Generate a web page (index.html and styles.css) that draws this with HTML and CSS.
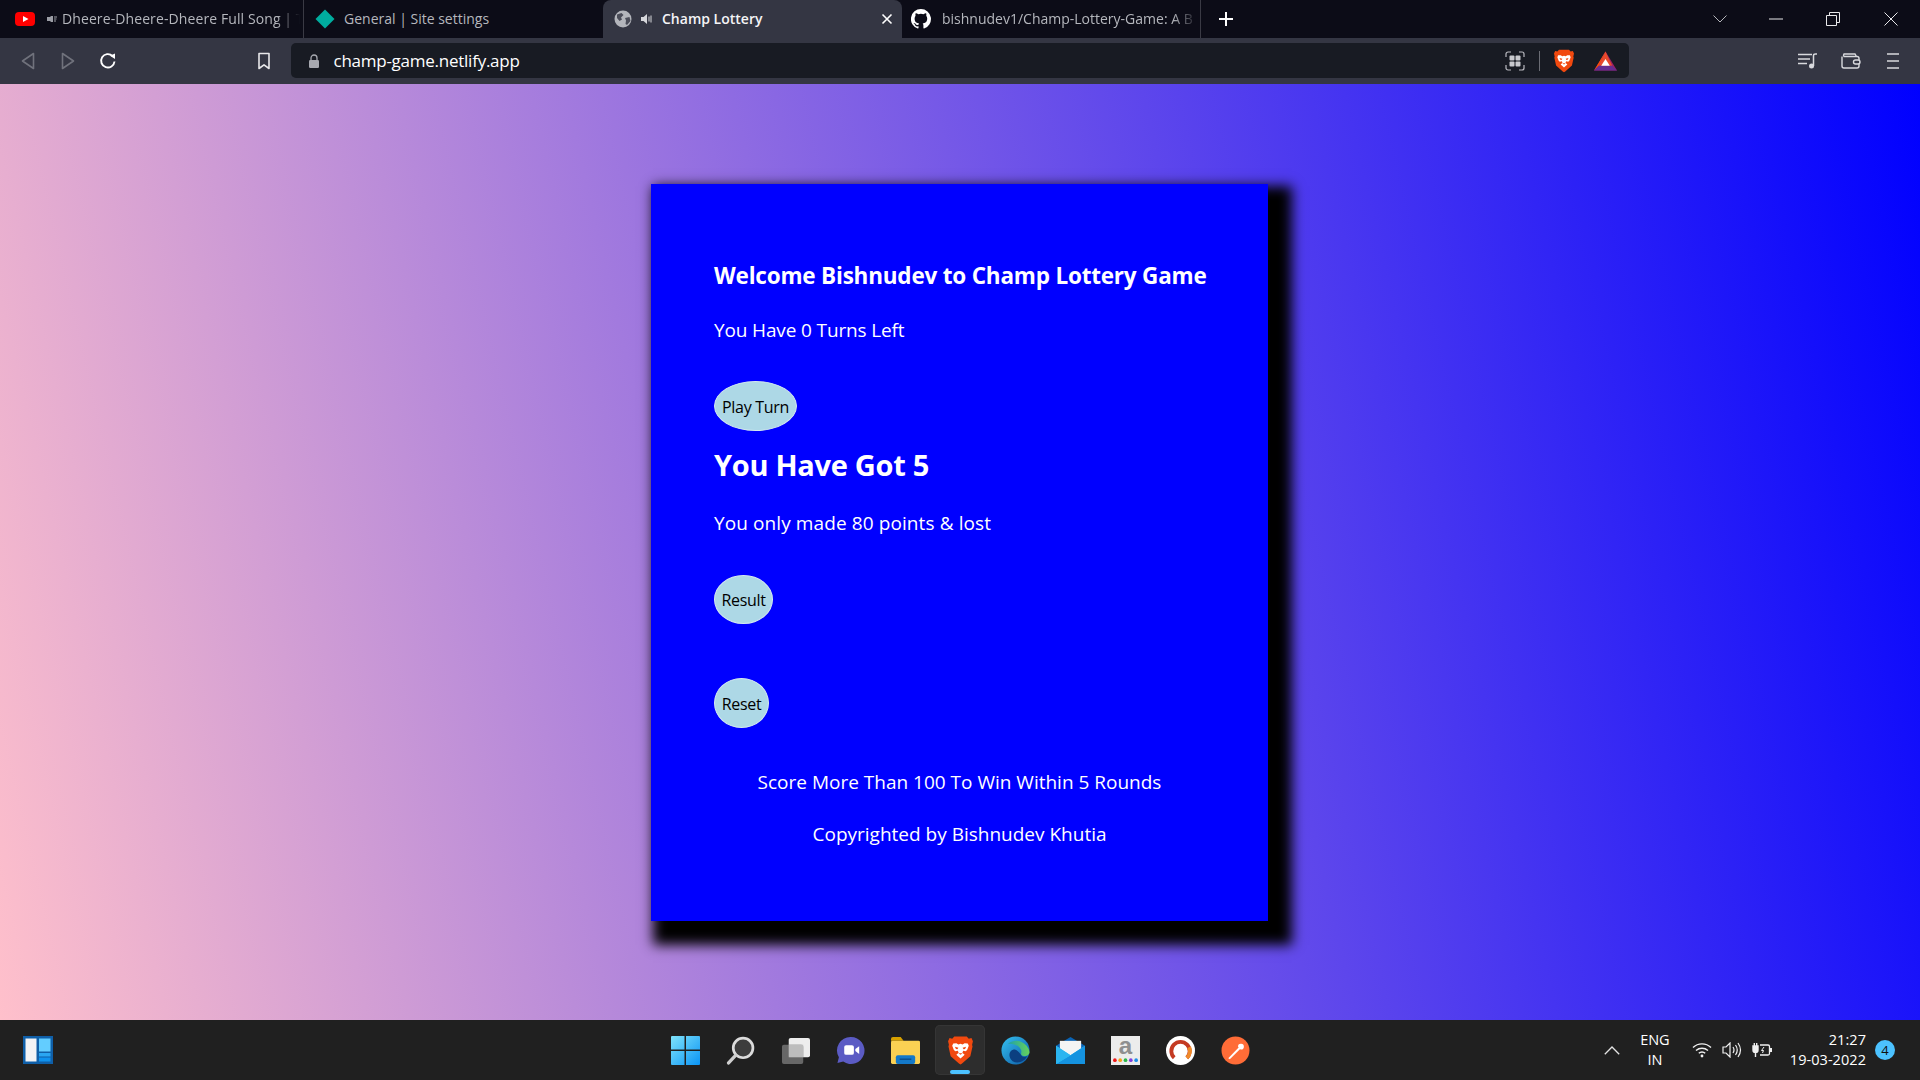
FILE: index.html
```html
<!DOCTYPE html>
<html lang="en">
<head>
<meta charset="utf-8">
<title>Champ Lottery</title>
<link rel="stylesheet" href="styles.css">
</head>
<body>
<svg class="defs" width="0" height="0">
  <defs>
    <symbol id="brave" viewBox="0 0 24 28">
      <path fill="#f1490f" d="M12 0.5 18 0.5 20 2.6 22.6 2 24 5 23.2 8.5 23.6 10.2 21.5 19.5 13.5 26.6 12 27.5 10.5 26.6 2.5 19.5 0.4 10.2 0.8 8.5 0 5 1.4 2 4 2.6 6 0.5Z"/>
      <path fill="#fff" d="M5 7.2 8 7 10 8.2 12 7.6 14 8.2 16 7 19 7.2 20 9.5 18.4 13.6 17 14.8 14.6 14.2 13.8 16.2 16 18.2 12 21.8 8 18.2 10.2 16.2 9.4 14.2 7 14.8 5.6 13.6 4 9.5Z"/>
      <path fill="#f1490f" d="M6.6 10.4 10 11.4 9 12.8 7.6 12.6ZM17.4 10.4 14 11.4 15 12.8 16.4 12.6Z"/>
      <path fill="#f1490f" d="M10 16.6 14 16.6 12 18.2Z"/>
    </symbol>
  </defs>
</svg>

<header class="tabstrip">
  <div class="tab tab-first">
    <svg class="fav" viewBox="0 0 20 20"><rect x="0" y="3" width="20" height="14" rx="4" fill="#f00"/><path d="M8 7l5.500 3L8 13z" fill="#fff"/></svg>
    <svg class="speaker" viewBox="0 0 12 12"><path d="M1 4h3l1 -1h2v6H5L4 8H1z" fill="#9c9ea6"/><path d="M8 4h3M8 6h2.500M8 8h2" stroke="#9c9ea6" fill="none"/></svg>
    <span class="tab-title fade">Dheere-Dheere-Dheere Full Song | T</span>
  </div>
  <div class="tab">
    <svg class="fav" viewBox="0 0 20 20"><path d="M10 0.500 19.500 10 10 19.500 0.500 10Z" fill="#00ad9f"/></svg>
    <span class="tab-title">General | Site settings</span>
  </div>
  <div class="tab tab-active">
    <svg class="fav fav-globe" viewBox="0 0 18 18"><circle cx="9" cy="9" r="8.500" fill="#b3b5bb"/><path d="M3 4.500 7.500 3 9.500 5 7 7.500 8 9.500 5.500 11 3 8ZM11 8l4.500 -1 1 4-3.500 4-1.500 -1 .5-3.500Z" fill="#4a4c58"/></svg>
    <svg class="speaker-on" viewBox="0 0 14 14"><path d="M1 5h2.500L7 2v10L3.500 9H1z" fill="#d6d7db"/><path d="M9 4.500v5M11 3.500v7" stroke="#d6d7db" fill="none"/></svg>
    <span class="tab-title title-active">Champ Lottery</span>
    <svg class="tab-close" viewBox="0 0 12 12"><path d="M1.500 1.500l9 9M10.500 1.500l-9 9" stroke="#fff" stroke-width="1.600"/></svg>
  </div>
  <div class="tab tab-last">
    <svg class="fav" viewBox="0 0 20 20"><path fill="#fff" fill-rule="evenodd" d="M10 0a10 10 0 0 0-3.200 19.500c.5.100.7-.2.7-.5v-1.700c-2.800.6-3.400-1.300-3.400-1.300-.5-1.200-1.100-1.500-1.100-1.500-.9-.6.100-.6.100-.6 1 .1 1.500 1 1.500 1 .9 1.500 2.300 1.100 2.900.8.100-.6.300-1.100.6-1.300-2.200-.3-4.500-1.100-4.500-4.900 0-1.100.4-2 1-2.700-.1-.3-.4-1.300.1-2.600 0 0 .8-.3 2.700 1a9.500 9.500 0 0 1 5 0c1.900-1.300 2.700-1 2.700-1 .5 1.300.2 2.300.1 2.600.6.700 1 1.600 1 2.700 0 3.800-2.300 4.600-4.500 4.900.4.300.7.900.7 1.900V19c0 .3.200.6.700.5A10 10 0 0 0 10 0z"/></svg>
    <span class="tab-title fade">bishnudev1/Champ-Lottery-Game: A B</span>
  </div>
  <svg class="plus" viewBox="0 0 16 16"><path d="M8 1v14M1 8h14" stroke="#fff" stroke-width="2"/></svg>
  <div class="win-controls">
    <svg class="win-chevron" viewBox="0 0 14 8"><path d="M.5.500 7 7 13.500.500" stroke="#b5b6bb" fill="none"/></svg>
    <svg class="win-min" viewBox="0 0 14 2"><path d="M0 1h14" stroke="#e8e8ea"/></svg>
    <svg class="win-max" viewBox="0 0 14 14"><path d="M.5 3.500h10v10H.5zM3.500 3.500V.5h10v10h-3" stroke="#e8e8ea" fill="none"/></svg>
    <svg class="win-close" viewBox="0 0 14 14"><path d="M.5.500l13 13M13.500.500l-13 13" stroke="#e8e8ea" fill="none"/></svg>
  </div>
</header>

<nav class="toolbar">
  <svg class="nav-icon back" viewBox="0 0 14 18"><path d="M12.500 1.500 1.500 9l11 7.500z" stroke="#70727c" stroke-width="1.600" fill="none" stroke-linejoin="round"/></svg>
  <svg class="nav-icon forward" viewBox="0 0 14 18"><path d="M1.500 1.500 12.500 9l-11 7.500z" stroke="#70727c" stroke-width="1.600" fill="none" stroke-linejoin="round"/></svg>
  <svg class="nav-icon reload" viewBox="0 0 18 18"><path d="M15.500 9.500A6.700 6.700 0 1 1 13.500 4" stroke="#fff" stroke-width="1.900" fill="none"/><path d="M11 3.700 16 1.500 16 7Z" fill="#fff"/></svg>
  <svg class="nav-icon bookmark" viewBox="0 0 14 18"><path d="M2 1.500h10v15L7 12.800 2 16.500z" stroke="#e8e8ea" stroke-width="1.600" fill="none" stroke-linejoin="round"/></svg>
  <div class="urlbar">
    <svg class="lock" viewBox="0 0 12 14"><path d="M3 6V4a3 3 0 0 1 6 0v2" stroke="#a7a9b0" stroke-width="1.300" fill="none"/><rect x="1" y="6" width="10" height="8" rx="1.200" fill="#a7a9b0"/></svg>
    <span class="url">champ-game.netlify.app</span>
    <svg class="url-apps" viewBox="0 0 20 20"><path d="M1 6V3a2 2 0 0 1 2-2h3M14 1h3a2 2 0 0 1 2 2v3M19 14v3a2 2 0 0 1-2 2h-3M6 19H3a2 2 0 0 1-2-2v-3" stroke="#b9bac0" stroke-width="1.200" fill="none"/><rect x="4.500" y="4.500" width="5" height="5" rx="1" fill="#c8c9ce"/><rect x="10.500" y="4.500" width="5" height="5" rx="1" fill="#c8c9ce"/><rect x="4.500" y="10.500" width="5" height="5" rx="1" fill="#c8c9ce"/><rect x="10.500" y="10.500" width="5" height="5" rx="1" fill="#c8c9ce"/></svg>
    <span class="url-sep"></span>
    <svg class="url-brave"><use href="#brave"/></svg>
    <svg class="url-bat" viewBox="0 0 24 20"><path d="M12 0 24 20H0Z" fill="#9e1f63"/><path d="M12 0 0 20 5 15Z" fill="#ff5000"/><path d="M12 0 5 15h14Z" fill="#e84a2c"/><path d="M0 20h24l-5-5H5Z" fill="#662d91"/><path d="M12 8 16.500 15h-9Z" fill="#fff"/></svg>
  </div>
  <svg class="tool-icon playlist" viewBox="0 0 20 16"><path d="M0 1.500h14M0 6h12M0 10.500h9" stroke="#d8d9dd" stroke-width="1.500"/><circle cx="13.500" cy="13" r="2.500" fill="#d8d9dd"/><path d="M15.500 13V2.500q0-1.500 2-1.500h1.500" stroke="#d8d9dd" stroke-width="1.500" fill="none"/></svg>
  <svg class="tool-icon wallet" viewBox="0 0 20 16"><path d="M1 3.500V13a2 2 0 0 0 2 2h13a2 2 0 0 0 2-2V5.500a2 2 0 0 0-2-2H3a2 2 0 0 1 0-2.500h11l1.500 2.500" stroke="#d8d9dd" stroke-width="1.400" fill="none"/><rect x="12.500" y="7" width="6.500" height="4" rx="2" stroke="#d8d9dd" stroke-width="1.400" fill="#343643"/></svg>
  <svg class="tool-icon menu" viewBox="0 0 12 16"><path d="M0 1h12M0 8h12M0 15h12" stroke="#d8d9dd" stroke-width="1.500"/></svg>
</nav>

<main class="page">
  <section class="card">
    <h3 class="card-title">Welcome Bishnudev to Champ Lottery Game</h3>
    <p class="line turns">You Have 0 Turns Left</p>
    <button class="pill play">Play Turn</button>
    <h2 class="got">You Have Got 5</h2>
    <p class="line made">You only made 80 points &amp; lost</p>
    <button class="pill result">Result</button>
    <button class="pill reset">Reset</button>
    <p class="line center score">Score More Than 100 To Win Within 5 Rounds</p>
    <p class="line center copy">Copyrighted by Bishnudev Khutia</p>
  </section>
</main>

<footer class="taskbar">
  <svg class="widgets" viewBox="0 0 30 28"><rect width="30" height="28" fill="#0f5fa8"/><rect x="2.500" y="2.500" width="11" height="23" fill="#f2f3f5"/><rect x="16" y="2.500" width="11.500" height="13" fill="#63cdff"/><rect x="16" y="17" width="11.500" height="3.500" fill="#2aa6f2"/><rect x="16" y="21.500" width="11.500" height="4" fill="#0f92ee"/></svg>
  <div class="task-center">
    <div class="task-item"><svg class="ti" viewBox="0 0 29 29"><defs><linearGradient id="winG" x1="0" y1="0" x2="1" y2="1"><stop offset="0" stop-color="#7fe3fb"/><stop offset="1" stop-color="#0a94f5"/></linearGradient></defs><path d="M0 1a1 1 0 0 1 1-1h12.500v13.500H0zM15 0h13a1 1 0 0 1 1 1v12.500H15zM0 15h13.500v14H1a1 1 0 0 1-1-1zM15 15h14v13a1 1 0 0 1-1 1H15z" fill="url(#winG)"/></svg></div>
    <div class="task-item"><svg class="ti" viewBox="0 0 28 28"><circle cx="16.500" cy="11.500" r="9.500" fill="#3d3d3d" stroke="#dcdcdc" stroke-width="2.600"/><path d="M9.500 18.500 2.500 26" stroke="#cfcfcf" stroke-width="3.200" stroke-linecap="round"/></svg></div>
    <div class="task-item"><svg class="ti" viewBox="0 0 30 28"><rect x="8" y="1" width="22" height="20" rx="2" fill="#ededed"/><rect x="1" y="8" width="22" height="20" rx="2" fill="#6e6e6e" fill-opacity=".92"/><rect x="8" y="8" width="15" height="13" fill="#bdbdbd"/></svg></div>
    <div class="task-item"><svg class="ti" viewBox="0 0 30 30"><path d="M15.500 1a14 14 0 1 1-8 25.500L1.500 28l1.500-6A14 14 0 0 1 15.500 1z" fill="#5b5bc4"/><rect x="8.500" y="9.500" width="10" height="10" rx="2" fill="#fff"/><path d="M20 13.500 24 10.500V18.500L20 15.500Z" fill="#fff"/></svg></div>
    <div class="task-item"><svg class="ti" viewBox="0 0 30 28"><path d="M0 2a2 2 0 0 1 2-2h8l3 4h-13z" fill="#d8a100"/><rect y="4" width="30" height="24" rx="1.500" fill="#fbd153"/><rect x="5" y="19" width="20" height="9" rx="2" fill="#1479c9"/><path d="M9 23h12" stroke="#0a4f8c" stroke-width="1.500"/></svg></div>
    <div class="task-item task-active"><svg class="ti"><use href="#brave"/></svg><span class="task-pip"></span></div>
    <div class="task-item"><svg class="ti" viewBox="0 0 30 30"><defs><linearGradient id="edgeA" x1="0" y1="0" x2="1" y2="1"><stop offset="0" stop-color="#35c1f1"/><stop offset="1" stop-color="#0c59a4"/></linearGradient><linearGradient id="edgeB" x1="0" y1="0" x2="1" y2="0"><stop offset="0" stop-color="#1fa0a8"/><stop offset="1" stop-color="#66d35a"/></linearGradient></defs><circle cx="15" cy="15" r="14.500" fill="url(#edgeA)"/><path d="M7 8a14 14 0 0 1 22.500 8.500c0 3-3.500 5-7 4-3-1-1-3-1.500-5.500C20 11 15 7.500 7 8z" fill="url(#edgeB)"/><path d="M12 26c-5-4-4-11 1-12 4 0 6 3 8 6 1 2 4 2 6 1-3 6-10 8-15 5z" fill="#0b3f80"/></svg></div>
    <div class="task-item"><svg class="ti" viewBox="0 0 30 28"><path d="M15 0 30 9V28H0V9Z" fill="#0a63b4"/><path d="M4 4h22v16H4z" fill="#f4f4f4"/><path d="M0 9 15 19 30 9V28H0Z" fill="#2cc4f6"/><path d="M30 28H0L15 19 30 9Z" fill="#1593e0"/><path d="M0 28V9L15 19Z" fill="#2bb5f0"/></svg></div>
    <div class="task-item"><svg class="ti" viewBox="0 0 30 30"><rect width="30" height="30" fill="#ececec"/><text class="amazon-a" x="15" y="19" text-anchor="middle">a</text><circle cx="4" cy="25" r="1.900" fill="#f01818"/><circle cx="9.500" cy="25" r="1.900" fill="#f7a21b"/><circle cx="15" cy="25" r="1.900" fill="#2bb84a"/><circle cx="20.500" cy="25" r="1.900" fill="#7d3ee0"/><circle cx="26" cy="25" r="1.900" fill="#1d8fe8"/></svg></div>
    <div class="task-item"><svg class="ti" viewBox="0 0 30 30"><circle cx="15" cy="15" r="15" fill="#fff"/><path d="M8.500 22.500a9.500 9.500 0 1 1 13 0" stroke="#c43a22" stroke-width="4" fill="none"/><path d="M21.500 22.500a9.500 9.500 0 0 0 2.500-11" stroke="#ef8a2a" stroke-width="4" fill="none"/></svg></div>
    <div class="task-item"><svg class="ti" viewBox="0 0 28 28"><circle cx="14" cy="14" r="13.500" fill="#ff6c37"/><path d="M7 21.500 17 11l1.500 1.500L8.500 22.500ZM16.500 10.500a2.800 2.800 0 1 1 2.500 2.500Z" fill="#fff"/></svg></div>
  </div>
  <div class="tray">
    <svg class="tray-chev" viewBox="0 0 16 9"><path d="M.8 8.200 8 1l7.200 7.200" stroke="#e4e4e4" stroke-width="1.300" fill="none"/></svg>
    <div class="lang"><span>ENG</span><span>IN</span></div>
    <svg class="tray-ico wifi" viewBox="0 0 20 15"><path d="M1 5a13 13 0 0 1 18 0M4 8a9 9 0 0 1 12 0M6.800 10.800a4.500 4.500 0 0 1 6.400 0" stroke="#f0f0f0" stroke-width="1.400" fill="none"/><circle cx="10" cy="13.500" r="1.400" fill="#f0f0f0"/></svg>
    <svg class="tray-ico vol" viewBox="0 0 20 16"><path d="M1 5h3l4-4v14l-4-4H1z" stroke="#f0f0f0" stroke-width="1.200" fill="none"/><path d="M11 5q2 3 0 6M13.500 3q3.500 5 0 10M16 1q5 7 0 14" stroke="#f0f0f0" stroke-width="1.200" fill="none"/></svg>
    <svg class="tray-ico batt" viewBox="0 0 20 16"><path d="M8 3h8a1.500 1.500 0 0 1 1.500 1.500v7A1.500 1.500 0 0 1 16 13H8" stroke="#f0f0f0" stroke-width="1.300" fill="none"/><rect x="18" y="6" width="2" height="4" fill="#f0f0f0"/><path d="M1 4h5v4a2.500 2.500 0 0 1-5 0zM2.300 1v3M4.700 1v3M3.500 10v5" stroke="#f0f0f0" stroke-width="1.400" fill="#f0f0f0"/><path d="M12 5 9.500 8.500h2L10.500 11" stroke="#f0f0f0" fill="none"/></svg>
    <div class="clock"><span>21:27</span><span>19-03-2022</span></div>
    <span class="badge">4</span>
  </div>
</footer>
</body>
</html>
```
FILE: styles.css
```css
* { box-sizing: border-box; }
html, body { margin: 0; height: 100%; }
body {
  display: flex;
  flex-direction: column;
  height: 1080px;
  overflow: hidden;
  font-family: "Open Sans", "Noto Sans", sans-serif;
  background: #202020;
}
.defs { position: absolute; }

/* tab strip */
.tabstrip {
  display: flex;
  align-items: center;
  height: 38px;
  flex: none;
  background: #0c0c17;
}
.tab {
  display: flex;
  align-items: center;
  width: 299px;
  height: 38px;
  padding-left: 15px;
  border-right: 1px solid #3a3a44;
  position: relative;
  overflow: hidden;
}
.tab-first { width: 304px; }
.tab-active {
  background: #343643;
  border-right: 0;
  border-radius: 8px 8px 0 0;
  padding-left: 11px;
}
.tab-last { padding-left: 9px; }
.tab:nth-child(2) { border-right: 0; padding-left: 11px; }
.fav { width: 20px; height: 20px; flex: none; }
.fav-globe { width: 18px; height: 18px; }
.speaker { width: 12px; height: 12px; margin-left: 11px; margin-right: 1px; flex: none; }
.speaker-on { width: 14px; height: 14px; margin-left: 8px; margin-right: 8px; flex: none; }
.tab-title {
  margin-left: 3px;
  padding-bottom: 2px;
  font-size: 14px;
  color: #b5b7bd;
  white-space: nowrap;
}
.tab:nth-child(2) .tab-title { margin-left: 9px; }
.tab-last .tab-title { margin-left: 11px; }
.fade {
  display: block;
  overflow: hidden;
  flex: none;
  width: 238px;
  letter-spacing: 0.1px;
  -webkit-mask-image: linear-gradient(to right, #000 90%, transparent 100%);
  mask-image: linear-gradient(to right, #000 90%, transparent 100%);
}
.tab-last .fade { width: 256px; letter-spacing: 0; }
.title-active {
  margin-left: 0;
  font-weight: 600;
  color: #f4f4f6;
}
.tab-close { width: 12px; height: 12px; margin-left: auto; margin-right: 9px; flex: none; }
.plus { width: 16px; height: 16px; margin-left: 17px; flex: none; }
.win-controls { display: flex; align-items: center; margin-left: auto; }
.win-chevron { width: 14px; height: 8px; margin-right: 42px; }
.win-min { width: 14px; height: 2px; margin-right: 43px; }
.win-max { width: 14px; height: 14px; margin-right: 44px; }
.win-close { width: 14px; height: 14px; margin-right: 22px; }

/* toolbar */
.toolbar {
  display: flex;
  align-items: center;
  height: 46px;
  flex: none;
  background: #343643;
  padding-left: 21px;
}
.nav-icon { flex: none; }
.back { width: 14px; height: 18px; }
.forward { width: 14px; height: 18px; margin-left: 26px; }
.reload { width: 18px; height: 18px; margin-left: 24px; }
.bookmark { width: 14px; height: 18px; margin-left: 140px; }
.urlbar {
  display: flex;
  align-items: center;
  width: 1338px;
  height: 35px;
  margin-left: 20px;
  margin-top: -1px;
  padding-left: 17px;
  background: #181b23;
  border-radius: 5px;
}
.lock { width: 12px; height: 14px; flex: none; }
.url {
  margin-left: 13.500px;
  font-size: 17px;
  color: #fff;
  letter-spacing: -0.25px;
}
.url-apps { width: 20px; height: 20px; margin-left: auto; flex: none; }
.url-sep { width: 1px; height: 20px; background: #6a6c74; margin-left: 14px; flex: none; }
.url-brave { width: 20px; height: 24px; margin-left: 14px; flex: none; }
.url-bat { width: 23px; height: 20px; margin-left: 20px; margin-right: 12px; flex: none; }
.tool-icon { flex: none; }
.playlist { width: 20px; height: 16px; margin-left: 169px; }
.wallet { width: 20px; height: 16px; margin-left: 23px; }
.menu { width: 12px; height: 16px; margin-left: 26px; }

/* page */
.page {
  flex: 1;
  display: flex;
  align-items: center;
  justify-content: center;
  background: linear-gradient(77deg, #ffc0cb, #0000ff);
  padding-right: 1px;
}
.card {
  width: 617px;
  height: 737px;
  padding: 77px 63px 0;
  background: #0000ff;
  color: #fff;
  box-shadow: 13px 13px 12px 11px #000;
}
.card-title {
  margin: 0;
  font-size: 22.5px;
  line-height: 30px;
  font-weight: 700;
  white-space: nowrap;
  letter-spacing: -0.2px;
}
.line {
  margin: 0;
  font-size: 19px;
  line-height: 26px;
  white-space: nowrap;
}
.center { text-align: center; }
.turns { margin-top: 26px; letter-spacing: -0.14px; }
.made { margin-top: 25px; letter-spacing: 0.1px; }
.score { margin-top: 41px; }
.copy { margin-top: 26px; }
.got {
  margin: 14px 0 0;
  font-size: 29px;
  line-height: 40px;
  font-weight: 700;
  letter-spacing: -0.3px;
}
.pill {
  display: block;
  padding: 2px 0 0;
  border: 1px solid #d4e9f0;
  border-radius: 50%;
  background: #add8e6;
  color: #000;
  font-family: inherit;
  font-size: 16px;
  letter-spacing: -0.3px;
}
.play { width: 83px; height: 50px; margin-top: 38px; }
.result { width: 59px; height: 49px; margin-top: 39px; }
.reset { width: 55px; height: 50px; margin-top: 54px; }

/* taskbar */
.taskbar {
  display: grid;
  grid-template-columns: 1fr auto 1fr;
  align-items: center;
  height: 60px;
  flex: none;
  background: #202020;
}
.widgets { width: 30px; height: 28px; margin-left: 23px; }
.task-center { display: flex; gap: 5px; }
.task-item {
  width: 50px;
  height: 50px;
  display: flex;
  align-items: center;
  justify-content: center;
  position: relative;
}
.ti { width: 29px; height: 29px; }
.task-active {
  background: #2d2d2d;
  border-radius: 5px;
  box-shadow: inset 0 0 0 1px #353535;
}
.task-pip {
  position: absolute;
  left: 15px;
  bottom: 1px;
  width: 20px;
  height: 4px;
  border-radius: 2px;
  background: #4cc2ff;
}
.amazon-a { font-family: "Liberation Sans", sans-serif; font-size: 25px; font-weight: 700; fill: #8f8f8f; }
.tray {
  display: flex;
  align-items: center;
  justify-content: flex-end;
  color: #fff;
  font-size: 14.500px;
}
.tray-chev { width: 16px; height: 9px; flex: none; }
.lang {
  display: flex;
  flex-direction: column;
  align-items: center;
  width: 30px;
  margin-left: 20px;
  line-height: 20px;
  letter-spacing: -0.2px;
}
.tray-ico { width: 20px; height: 16px; flex: none; }
.wifi { margin-left: 22px; }
.vol { margin-left: 10px; }
.batt { margin-left: 10px; }
.clock {
  display: flex;
  flex-direction: column;
  align-items: flex-end;
  margin-left: 18px;
  line-height: 20px;
  letter-spacing: 0.05px;
}
.badge {
  display: flex;
  align-items: center;
  justify-content: center;
  width: 20px;
  height: 20px;
  margin-left: 9px;
  margin-right: 25px;
  border-radius: 50%;
  background: #4cc2ff;
  color: #111;
  font-size: 13px;
  flex: none;
}
```
